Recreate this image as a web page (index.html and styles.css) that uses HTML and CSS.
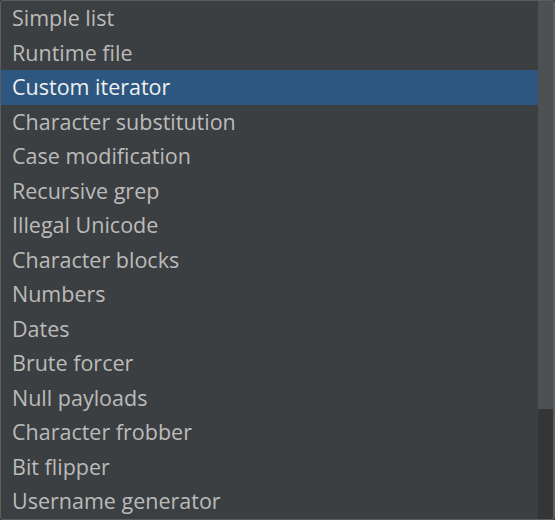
FILE: index.html
```html
<!DOCTYPE html>
<html>
<head>
<meta charset="utf-8">
<link rel="stylesheet" href="styles.css">
</head>
<body>
<div class="popup">
  <ul class="list">
    <li class="item">Simple list</li>
    <li class="item">Runtime file</li>
    <li class="item selected">Custom iterator</li>
    <li class="item">Character substitution</li>
    <li class="item">Case modification</li>
    <li class="item">Recursive grep</li>
    <li class="item">Illegal Unicode</li>
    <li class="item">Character blocks</li>
    <li class="item">Numbers</li>
    <li class="item">Dates</li>
    <li class="item">Brute forcer</li>
    <li class="item">Null payloads</li>
    <li class="item">Character frobber</li>
    <li class="item">Bit flipper</li>
    <li class="item">Username generator</li>
  </ul>
  <div class="scrollbar">
    <div class="thumb"></div>
    <div class="track"></div>
  </div>
</div>
</body>
</html>
```

FILE: styles.css
```css
html, body {
  margin: 0;
  padding: 0;
  background: #3c3f41;
}
.popup {
  box-sizing: border-box;
  width: 555px;
  height: 520px;
  border: 1px solid #5b5d5f;
  border-right-width: 2px;
  border-radius: 4px;
  background: #3c3f41;
  display: flex;
  overflow: hidden;
}
.list {
  list-style: none;
  margin: 0;
  padding: 0;
  flex: 1;
}
.item {
  height: 34.5px;
  line-height: 34.5px;
  padding-left: 11px;
  font-family: "Open Sans", "Noto Sans", sans-serif;
  font-size: 21.5px;
  color: #bbbbbb;
  white-space: nowrap;
}
.item.selected {
  background: #2d5780;
  color: #f0f0f0;
}
.scrollbar {
  width: 15px;
  display: flex;
  flex-direction: column;
}
.thumb {
  height: 408px;
  background: #4e5153;
}
.track {
  flex: 1;
  background: #333537;
}
```
